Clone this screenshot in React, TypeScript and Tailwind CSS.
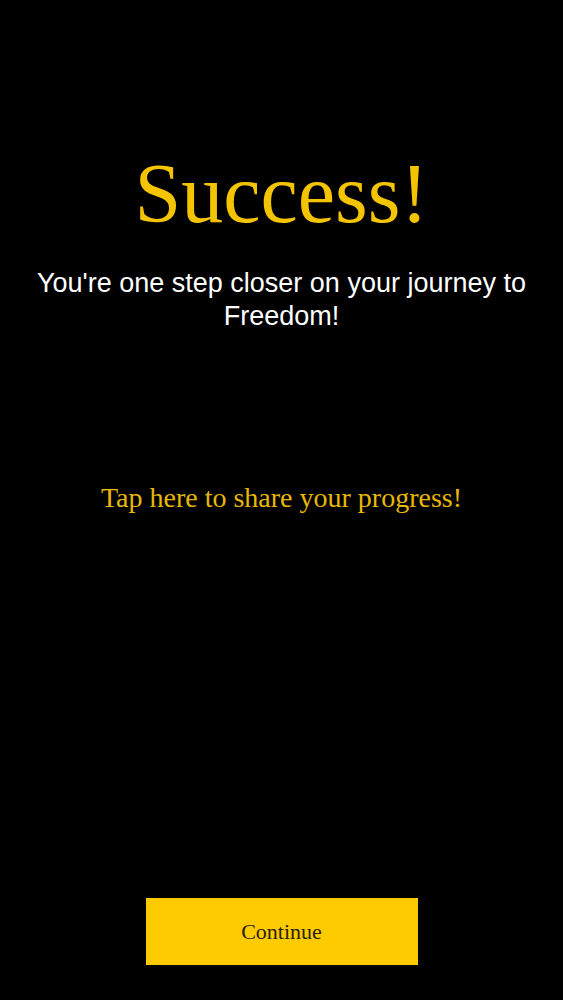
import React from 'react'

const App = () => {
  return (
    <div className="w-full h-[1000px] bg-black flex flex-col items-center">
      <h1 className="mt-[146px] font-['Liberation_Serif','DejaVu_Serif',serif] text-[84px] leading-[96px] text-[#f5c400] text-center">
        Success!
      </h1>
      <p className="mt-[25px] px-6 font-['Liberation_Sans',Arial,sans-serif] text-[27px] leading-[33px] text-white text-center">
        You're one step closer on your journey to Freedom!
      </p>
      <p className="mt-[148px] font-['Liberation_Serif','DejaVu_Serif',serif] text-[28px] leading-[34px] text-[#e8b800] text-center">
        Tap here to share your progress!
      </p>
      <div className="flex-1" />
      <button className="mb-[35px] w-[272px] h-[67px] bg-[#fdcb00] font-['Liberation_Serif','DejaVu_Serif',serif] text-[22px] text-[#2a2200]">
        Continue
      </button>
    </div>
  )
}

export default App
